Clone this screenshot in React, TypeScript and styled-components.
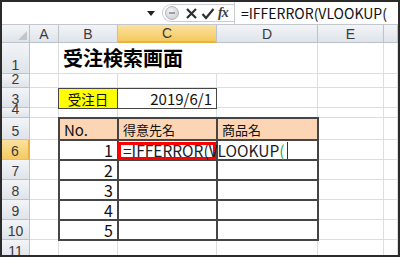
import React from 'react';
import styled, { createGlobalStyle, css } from 'styled-components';

const GlobalStyle = createGlobalStyle`
  html, body {
    margin: 0;
    padding: 0;
    background: #ffffff;
  }
  body {
    font-family: "Noto Sans CJK JP", "Liberation Sans", sans-serif;
  }
`;

const Frame = styled.div`
  width: 400px;
  height: 257px;
  box-sizing: border-box;
  border: 2px solid #2b2b2b;
  display: flex;
  flex-direction: column;
  overflow: hidden;
  background: #ffffff;
`;

const FormulaBar = styled.div`
  height: 22px;
  flex: none;
  display: flex;
  align-items: center;
  border-bottom: 1px solid #c3c8cf;
  background: #ffffff;
`;

const NameBox = styled.div`
  width: 160px;
  height: 100%;
  display: flex;
  align-items: center;
  justify-content: flex-end;
  padding-right: 7px;
  box-sizing: border-box;
`;

const ButtonGroup = styled.div`
  width: 72px;
  height: 18px;
  display: flex;
  align-items: center;
  gap: 3px;
  border: 1px solid #c9cdd3;
  border-right: none;
  border-radius: 10px 0 0 10px;
  box-sizing: border-box;
  padding-left: 2px;
`;

const Grip = styled.div`
  width: 12px;
  height: 12px;
  border-radius: 50%;
  background: radial-gradient(circle at 40% 35%, #f4f4f4, #c4c6ca);
  border: 1px solid #b2b5ba;
  display: flex;
  align-items: center;
  justify-content: center;
  &::after {
    content: '';
    width: 6px;
    height: 2px;
    background: #9a9da2;
  }
`;

const Fx = styled.span`
  font-family: "Liberation Serif", serif;
  font-style: italic;
  font-weight: bold;
  font-size: 14px;
  color: #404040;
  letter-spacing: -1px;
`;

const FormulaText = styled.div`
  flex: 1;
  height: 100%;
  display: flex;
  align-items: center;
  padding-left: 6px;
  border-left: 1px solid #c9cdd3;
  font-size: 14px;
  color: #111;
  white-space: nowrap;
`;

const Sheet = styled.div`
  flex: 1;
  overflow: hidden;
  display: grid;
  grid-template-columns: 28px 29px 59px 99px 101px 66px 1fr;
  grid-template-rows: 18px 31px 14px 20px 10px 22px repeat(6, 20px);
`;

const headerLook = css<{ $active?: boolean }>`
  background: ${(p) =>
    p.$active
      ? 'linear-gradient(#fbe29d, #f5c962)'
      : 'linear-gradient(#f2f4f7, #dfe4ea)'};
  color: #3a3a3a;
  font-family: "Liberation Sans", sans-serif;
  font-size: 14px;
  box-sizing: border-box;
  border-right: 1px solid #bcc2c9;
  border-bottom: 1px solid #bcc2c9;
`;

const Corner = styled.div`
  ${headerLook};
  display: flex;
  align-items: flex-end;
  justify-content: flex-end;
  padding: 0 2px 2px 0;
`;

const ColHeader = styled.div<{ $active?: boolean }>`
  ${headerLook};
  display: flex;
  align-items: center;
  justify-content: center;
  ${(p) => p.$active && 'border-bottom: 2px solid #e8b23c;'}
`;

const RowHeader = styled.div<{ $active?: boolean }>`
  ${headerLook};
  display: flex;
  align-items: flex-end;
  justify-content: center;
  padding-bottom: 1px;
  line-height: 1;
  ${(p) => p.$active && 'border-right: 2px solid #e8b23c;'}
`;

const Cell = styled.div<{ $span?: number }>`
  box-sizing: border-box;
  border-right: 1px solid #dcdee1;
  border-bottom: 1px solid #dcdee1;
  display: flex;
  align-items: center;
  min-width: 0;
  ${(p) => p.$span && `grid-column: span ${p.$span};`}
`;

const Title = styled(Cell)`
  border-right: none;
  font-size: 20px;
  font-weight: bold;
  color: #000;
  padding-left: 4px;
  align-items: flex-end;
  padding-bottom: 1px;
  white-space: nowrap;
  overflow: visible;
`;

const Boxed = styled.div<{
  $bg?: string;
  $align?: 'left' | 'right' | 'center';
  $size?: number;
}>`
  position: relative;
  z-index: 1;
  margin: -1px;
  box-sizing: border-box;
  border: 2px solid #454545;
  background: ${(p) => p.$bg || '#ffffff'};
  display: flex;
  align-items: center;
  justify-content: ${(p) =>
    p.$align === 'right' ? 'flex-end' : p.$align === 'center' ? 'center' : 'flex-start'};
  padding: 0 4px;
  font-size: ${(p) => p.$size || 15}px;
  color: #111;
  white-space: nowrap;
  min-width: 0;
`;

const ThinBoxed = styled(Boxed)`
  border-width: 1px;
  margin: 0 0 -1px -1px;
`;

const EditCell = styled(Boxed)`
  z-index: 3;
  overflow: visible;
  padding-left: 4px;
  font-size: 15.5px;
  color: #1c1c2a;
  &::after {
    content: '';
    position: absolute;
    top: 1px;
    left: -1px;
    right: 0;
    bottom: -1px;
    border: 3px solid #ff0000;
  }
`;

const EditText = styled.span`
  position: relative;
  z-index: 2;
  display: flex;
  align-items: center;
`;

const Paren = styled.span`
  color: #2ea55a;
`;

const Caret = styled.span`
  width: 1px;
  height: 17px;
  margin-left: 2px;
  background: #333;
`;

const cols = ['A', 'B', 'C', 'D', 'E', ''];

const App: React.FC = () => {
  const tableRows = [1, 2, 3, 4, 5];

  return (
    <Frame>
      <GlobalStyle />
      <FormulaBar>
        <NameBox>
          <svg width="8" height="5" viewBox="0 0 8 5">
            <polygon points="0,0 8,0 4,5" fill="#222" />
          </svg>
        </NameBox>
        <ButtonGroup>
          <Grip />
          <svg width="13" height="13" viewBox="0 0 13 13" style={{ marginLeft: 3 }}>
            <path d="M2 2 L11 11 M11 2 L2 11" stroke="#2f2f2f" strokeWidth="2.2" />
          </svg>
          <svg width="14" height="13" viewBox="0 0 14 13">
            <path d="M1.5 7 L5 11 L12.5 2" stroke="#2f2f2f" strokeWidth="2.2" fill="none" />
          </svg>
          <Fx>fx</Fx>
        </ButtonGroup>
        <FormulaText>=IFFERROR(VLOOKUP(</FormulaText>
      </FormulaBar>

      <Sheet>
        <Corner>
          <svg width="9" height="9" viewBox="0 0 9 9">
            <polygon points="9,0 9,9 0,9" fill="#c1c6cc" />
          </svg>
        </Corner>
        {cols.map((c) => (
          <ColHeader key={c || 'F'} $active={c === 'C'}>
            {c}
          </ColHeader>
        ))}

        <RowHeader>1</RowHeader>
        <Cell />
        <Title $span={2}>受注検索画面</Title>
        <Cell />
        <Cell />
        <Cell />

        <RowHeader>2</RowHeader>
        <Cell />
        <Cell />
        <Cell />
        <Cell />
        <Cell />
        <Cell />

        <RowHeader>3</RowHeader>
        <Cell />
        <ThinBoxed $bg="#ffff00" $align="center" $size={13.5}>
          受注日
        </ThinBoxed>
        <ThinBoxed $align="right" $size={15}>
          2019/6/1
        </ThinBoxed>
        <Cell />
        <Cell />
        <Cell />

        <RowHeader>4</RowHeader>
        <Cell />
        <Cell />
        <Cell />
        <Cell />
        <Cell />
        <Cell />

        <RowHeader>5</RowHeader>
        <Cell />
        <Boxed $bg="#fcd5b4" $size={15}>
          No.
        </Boxed>
        <Boxed $bg="#fcd5b4" $size={13}>
          得意先名
        </Boxed>
        <Boxed $bg="#fcd5b4" $size={13}>
          商品名
        </Boxed>
        <Cell />
        <Cell />

        {tableRows.map((n) => (
          <React.Fragment key={n}>
            <RowHeader $active={n === 1}>{n + 5}</RowHeader>
            <Cell />
            <Boxed $align="right" $size={16}>
              {n}
            </Boxed>
            {n === 1 ? (
              <EditCell>
                <EditText>
                  =IFFERROR(VLOOKUP<Paren>(</Paren>
                  <Caret />
                </EditText>
              </EditCell>
            ) : (
              <Boxed />
            )}
            <Boxed />
            <Cell />
            <Cell />
          </React.Fragment>
        ))}

        <RowHeader>11</RowHeader>
        <Cell />
        <Cell />
        <Cell />
        <Cell />
        <Cell />
        <Cell />
      </Sheet>
    </Frame>
  );
};

export default App;
